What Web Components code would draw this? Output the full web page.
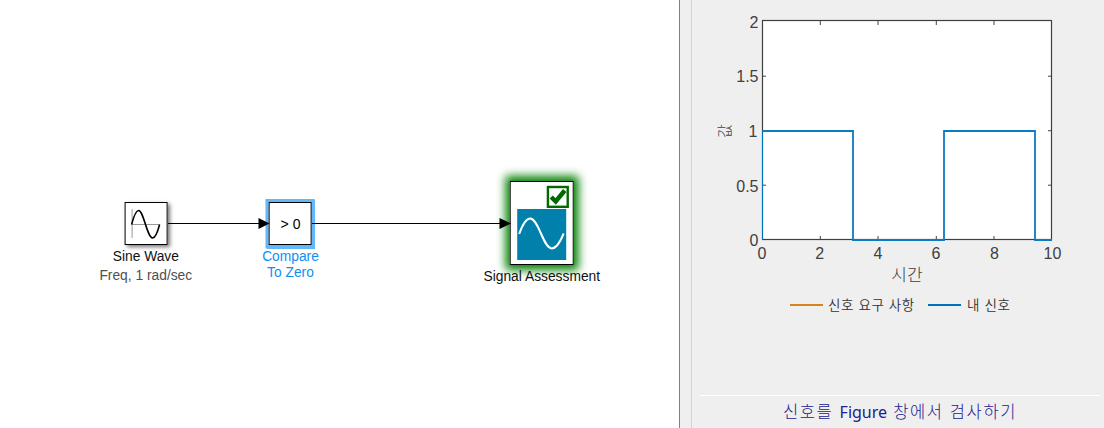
<!DOCTYPE html>
<html lang="ko"><head><meta charset="utf-8"><title>Signal Assessment</title>
<style>html,body{margin:0;height:100%;overflow:hidden;background:#fff}body{font-family:"Liberation Sans","Noto Sans CJK KR",sans-serif}</style></head>
<body><signal-app></signal-app>
<script>
const define=(name,html)=>customElements.define(name,class extends HTMLElement{
 constructor(){super();const t=document.createElement('template');t.innerHTML=html;this.attachShadow({mode:'open'}).append(t.content.cloneNode(true));}
});
define('model-block',`<style>
:host{position:absolute;display:flex;flex-direction:column;align-items:center;transform:translateX(-50%);font-size:13.800px;line-height:16px;color:#111;white-space:nowrap}
.box{box-sizing:border-box;width:var(--w,43px);height:var(--h,43px);border:1.5px solid #000;background:#fff;box-shadow:var(--glow,2px 2px 4px #0008);display:grid;place-items:center}
.label{position:relative;margin-top:var(--gap,4px);text-align:center}
</style><div class="box"><slot name="icon"></slot></div><div class="label"><slot></slot></div>`);
define('sine-icon',`<style>:host{display:block;height:36px}svg{display:block}</style>
<svg width="36" height="36" fill="none"><path d="M4.5 3v29M4 18.5h28" stroke="#999"/><path d="M4 18.500C6.500 9 8.500 4.500 11 4.500C16 4.500 19.500 32 25 32C27.500 32 29.500 28 32 18.500" stroke="#000" stroke-width="1.600"/></svg>`);
define('assessment-icon',`<style>:host{display:block;height:80px}svg{display:block}</style>
<svg width="60" height="80" fill="none"><rect x="36.200" y="4" width="19.800" height="19.800" stroke="#006a00" stroke-width="2.400"/><path d="M39.500 14l4.500 4.500 9-11" stroke="#006a00" stroke-width="4.500"/>
<rect x="5.500" y="26" width="49" height="51" fill="#0080ab"/><path d="M7.500 51C11.500 39.500 14.500 35.500 18.500 35.500c8.500 0 13 30 21.500 30 4 0 7.500-4 12-15" stroke="#fff" stroke-width="2"/></svg>`);
define('signal-wires',`<style>:host,svg{display:block}:host{position:relative;z-index:2;pointer-events:none}</style><svg width="679" height="428"><path d="M168 223.500h92M312 223.500h189" stroke="#000" fill="none"/><path d="M258.500 218l11 5.500-11 5.500zM499.500 218l11.500 5.500-11.500 5.500z"/></svg>`);
define('model-canvas',`<style>:host{display:block;position:relative;width:679px;background:#fff}
#sine{left:145.800px;top:202px}#cmp{left:290.500px;top:202px;--glow:0 0 0 3px #62b8fb,0 0 1px 3.500px #62b8fb;color:#0c90f5}.value{font-size:14px;color:#000}#assess{left:541.800px;top:181px;--w:64px;--h:84px;--gap:4px;--glow:0 0 9px 5px #008000}
.sub{color:#505050;margin-top:3px}</style>
<signal-wires></signal-wires>
<model-block id="sine"><sine-icon slot="icon"></sine-icon><div>Sine Wave</div><div class="sub">Freq, 1 rad/sec</div></model-block>
<model-block id="cmp"><span slot="icon" class="value">&gt; 0</span><div>Compare</div><div>To Zero</div></model-block>
<model-block id="assess"><assessment-icon slot="icon"></assessment-icon>Signal Assessment</model-block>`);
define('signal-chart',`<style>:host{display:block;height:290px}svg{display:block}text{font:16px "Liberation Sans","Noto Sans CJK KR",sans-serif;fill:#404040}.end{text-anchor:end}.mid{text-anchor:middle}text.ko{font-family:"Noto Sans CJK KR",sans-serif;font-weight:300}</style>
<svg width="412" height="290" viewBox="692 0 412 290"><rect x="762.500" y="20.500" width="289" height="219" fill="#fff" stroke="#3f3f3f" stroke-width="1.200"/>
<path d="M820.300 21v4m57.700-4v4m58.300-4v4m57.700-4v4M820.300 239v-3m57.700 3v-3m58.300 3v-3m57.700 3v-3M763 76.200h3m-3 109h3M1051 76.200h-3m3 54.500h-3m3 54.500h-3" stroke="#444"/>
<path d="M762.500 131v109" stroke="#0072bd"/><path d="M762.500 131H853v109h91V131h91v109h17" fill="none" stroke="#0d7bc4" stroke-width="1.800"/>
<g class="end"><text x="758.500" y="27.500">2</text><text x="758.500" y="82">1.5</text><text x="757.500" y="137">1</text><text x="758.500" y="192">0.5</text><text x="758.500" y="246">0</text></g>
<g class="mid"><text x="762" y="259">0</text><text x="819.700" y="259">2</text><text x="878" y="259">4</text><text x="936" y="259">6</text><text x="994.500" y="259">8</text><text x="1052.500" y="259">10</text><text class="ko" x="907" y="281" style="font-size:17px">시간</text><text class="ko" transform="translate(729.500 131) rotate(-90)" style="font-size:15px">값</text></g></svg>`);
define('chart-legend',`<style>:host{display:flex;align-items:center;height:30px;padding-left:98px;font:350 13.500px/20px "Noto Sans CJK KR",sans-serif;letter-spacing:.6px;color:#333;white-space:nowrap}i{height:2px;width:33px;background:#d8841c;margin-right:5px}.own{background:#0072bd;margin-left:14px;margin-right:6px}span{position:relative;top:-1px}span:first-of-type{width:86px}</style><i></i><span>신호 요구 사항</span><i class="own"></i><span>내 신호</span>`);
define('figure-link',`<style>:host{display:block;margin:auto 4px 0 8px;height:32px;border-top:1px solid #fff;text-align:center;color:#20208e;font:300 16.500px/31px "Noto Sans CJK KR",sans-serif;letter-spacing:1.600px;white-space:nowrap}.latin{font:400 16px/31px "Noto Sans",sans-serif;letter-spacing:0}</style><span>신호를 </span><span class="latin">Figure</span><span> 창에서 검사하기</span>`);
define('result-panel',`<style>:host{box-sizing:border-box;display:flex;width:425px;border-left:1px solid #808088;background:#efefef}main{box-sizing:border-box;display:flex;flex-direction:column;margin-left:11px;width:413px;border-left:1px solid #d4d4d4}</style><main><signal-chart></signal-chart><chart-legend></chart-legend><figure-link></figure-link></main>`);
define('signal-app',`<style>:host{display:flex;width:1104px;height:428px}</style><model-canvas></model-canvas><result-panel></result-panel>`);
</script></body></html>
